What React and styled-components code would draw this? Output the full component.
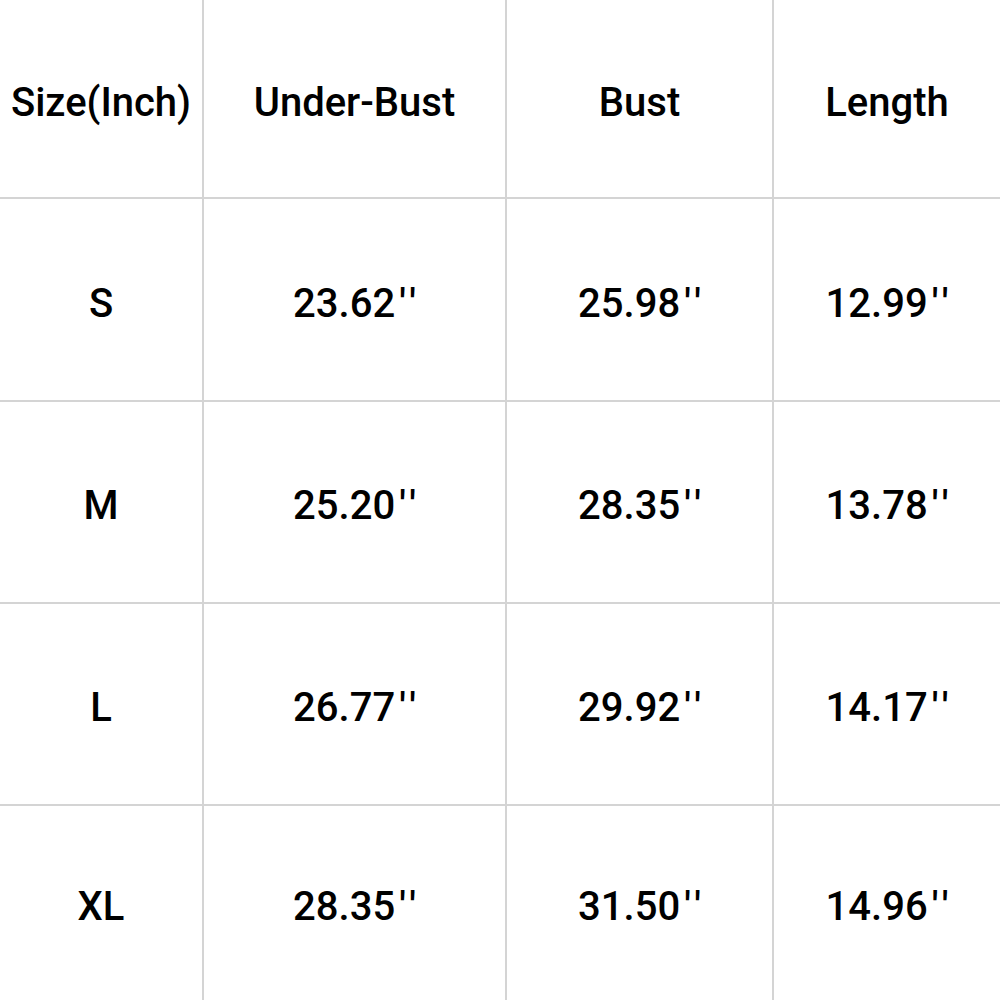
import React from "react";
import styled, { createGlobalStyle } from "styled-components";

const Global = createGlobalStyle`
  html, body { margin: 0; padding: 0; background: #fff; }
  #root { width: 1000px; height: 1000px; }
`;

const Table = styled.div`
  width: 1000px;
  height: 1000px;
  display: grid;
  grid-template-columns: 202px 301px 265px 1fr;
  grid-template-rows: 197px 201px 200px 200px 1fr;
  gap: 2px;
  background: #d4d4d4;
  overflow: hidden;
`;

const Cell = styled.div`
  background: #fff;
  display: flex;
  align-items: center;
  justify-content: center;
  padding-top: 7px;
  font-family: Roboto, "Liberation Sans", Arial, sans-serif;
  font-weight: 500;
  font-size: 40px;
  color: #000;
  white-space: nowrap;
`;

const Quote = styled.span`
  letter-spacing: 5px;
  margin-left: 4px;
  margin-right: -5px;
`;

const headers = ["Size(Inch)", "Under-Bust", "Bust", "Length"];
const rows = [
  ["S", "23.62", "25.98", "12.99"],
  ["M", "25.20", "28.35", "13.78"],
  ["L", "26.77", "29.92", "14.17"],
  ["XL", "28.35", "31.50", "14.96"],
];

export default function App() {
  return (
    <>
      <Global />
      <Table>
        {headers.map((h) => (
          <Cell key={h}>{h}</Cell>
        ))}
        {rows.map((r) =>
          r.map((c, i) => (
            <Cell key={r[0] + i}>
              {c}
              {i > 0 && <Quote>''</Quote>}
            </Cell>
          ))
        )}
      </Table>
    </>
  );
}
